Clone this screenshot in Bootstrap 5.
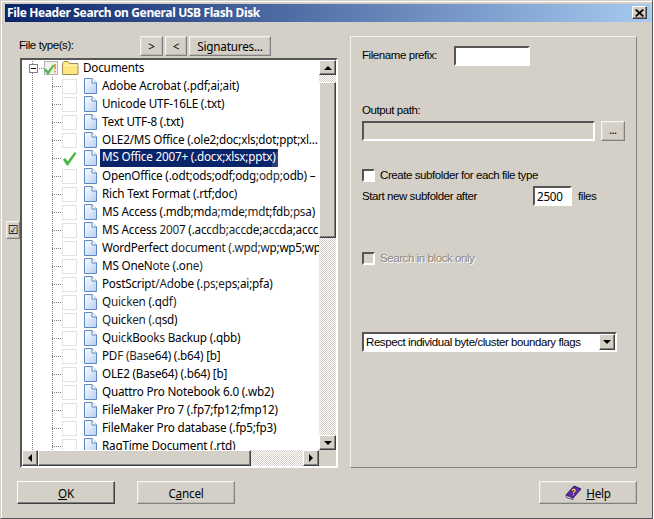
<!DOCTYPE html>
<html lang="en"><head><meta charset="utf-8"><title>File Header Search</title>
<link rel="stylesheet" href="https://cdn.jsdelivr.net/npm/bootstrap@5.3.0/dist/css/bootstrap.min.css">
<style>
html,body{margin:0;padding:0;width:654px;height:519px;overflow:hidden;background:#fff}
body{font-family:"Noto Sans",sans-serif;font-size:11.7px;letter-spacing:-.2px;line-height:16px;color:#000}
.win{width:653px;height:519px;background:#d4d0c8;border-right:1px solid #555;border-bottom:1px solid #555;border-top:1px solid #d4d0c8;border-left:1px solid #d4d0c8;box-shadow:inset 1px 1px 0 #fff;padding-top:3px;overflow:hidden}
.tbar{height:18px;width:646px;margin-left:4px;background:linear-gradient(90deg,#0a246a,#a6caf0);color:#fff;font:bold 12px/18px "Noto Sans",sans-serif;letter-spacing:-.37px;padding-left:2px}
.xbtn{width:15px;height:13px;margin:2px 4px 0 0}
.w95{background:#d4d0c8;border:1px solid;border-color:#fff #404040 #404040 #fff;box-shadow:inset -1px -1px 0 #808080;color:#000;padding:0;font-family:inherit;font-size:11.7px;letter-spacing:-.2px;line-height:14px;border-radius:0;text-align:center}
.w95s{border-color:#f4f3f0 #808080 #808080 #f4f3f0;box-shadow:inset -1px -1px 0 #bdb9b0,inset 1px 1px 0 #dedbd4}
.sunk{background:#fff;border:2px solid;border-color:#555 #fff #fff #555}
.mainrow{margin-top:14px;padding-left:5px}
.toggler{width:14px;height:18px;margin-top:185px;font-family:"DejaVu Sans",sans-serif;font-size:12px;flex:none}
.lcol{width:318px;flex:none}
.toprow{height:22px;margin-left:-1px}
.toplab{width:121px;padding-top:1px}
.narrow{font-family:"Liberation Sans",sans-serif;font-size:11.5px;letter-spacing:-.42px}
.tb{height:20px;margin-right:2px}
.tb1{width:23px}.tb2{width:22px}.tb3{width:82px}
.tree{height:410px}
.rows{height:390px;width:297px;overflow:hidden}
.trow{height:18px;white-space:nowrap;align-items:center;padding-left:40px;padding-bottom:2px;
background-image:repeating-linear-gradient(to bottom,#808080 0 1px,transparent 1px 2px),repeating-linear-gradient(to bottom,#808080 0 1px,transparent 1px 2px),repeating-linear-gradient(to right,#808080 0 1px,transparent 1px 2px);
background-size:1px 18px,1px 18px,10px 1px;background-position:10px 0,30px 0,30px 9px;background-repeat:no-repeat}
.trow0{margin-top:-1px;padding-left:22px;
background-image:repeating-linear-gradient(to bottom,#808080 0 1px,transparent 1px 2px),repeating-linear-gradient(to right,#808080 0 1px,transparent 1px 2px);
background-size:1px 18px,8px 1px;background-position:10px 0,15px 9px}
.ck{width:15px;height:15px;border:1px solid #e2e2e2;flex:none;background:#fff;margin:2px 6px 0 0}
.nock{width:15px;height:15px;flex:none;margin:2px 6px 0 0}
.ck0{width:14px;height:14px;flex:none;margin:2px 4px 0 0}
.doc{flex:none;margin:2px 5px 0 0}
.fold{flex:none;margin:2px 4px 0 0}
.plus{width:9px;height:9px;border:1px solid #808080;background:#fff;position:absolute;left:7px;top:5px;display:flex;align-items:center;justify-content:center}
.plus i{display:block;width:5px;height:1px;background:#000}
.seltxt{background:#0a246a;color:#fff;padding:0 2px;margin:2px 0 0 -2px;height:18px;line-height:15px}
.vs{width:17px;background:repeating-conic-gradient(#d4d0c8 0 25%,#fff 0 50%) 0 0/2px 2px}
.hs{height:16px;background:repeating-conic-gradient(#d4d0c8 0 25%,#fff 0 50%) 0 0/2px 2px}
.sbb{flex:none;width:17px;height:15px;display:flex;align-items:center;justify-content:center}
.vthumb{height:156px;margin-top:7px;width:17px}
.hb{width:16px;height:16px}
.hthumb{width:213px;height:16px}
.corner{width:17px;background:#d4d0c8;flex:none}
.tri-u,.tri-d,.tri-l,.tri-r{display:block;width:0;height:0;border-style:solid;border-color:transparent}
.tri-u{border-width:0 4px 4px;border-bottom-color:#000}
.tri-d{border-width:4px 4px 0;border-top-color:#000}
.tri-l{border-width:4px 4px 4px 0;border-right-color:#000}
.tri-r{border-width:4px 0 4px 4px;border-left-color:#000}
.panel{width:287px;height:432px;margin-left:12px;flex:none;border:1px solid;border-color:#f4f3f0 #85827a #85827a #f4f3f0;padding:9px 0 0 11px}
.pref{width:76px;height:20px}
.lab1{width:92px;padding-top:1px}
.lab2{margin-top:36px;height:16px}
.pathrow{margin-top:3px;height:20px}
.pathin{width:233px;height:20px;background:#d4d0c8}
.dots{width:24px;height:20px;margin-left:6px;line-height:14px;font-weight:bold;font-size:9px;letter-spacing:0}
.chkrow{margin-top:26px;height:16px}
.box{width:13px;height:13px;flex:none;background:#fff;border:2px solid;border-color:#555 #fff #fff #555;margin-right:5px}
.box2{background:#d4d0c8}
.afterrow{margin-top:3px;height:20px}
.afterlab{width:171px}
.cnt{width:39px;height:20px;padding:0 0 0 2px;line-height:16px;font-family:"Noto Sans",sans-serif;font-size:11.7px;letter-spacing:-.3px}
.fl{margin-left:6px}
.srow{margin-top:44px;height:16px;color:#8a877f;text-shadow:1px 1px 0 #fff}
.selbox{margin-top:66px;width:255px;height:20px;padding-left:2px;line-height:15px;white-space:nowrap}
.selarr{width:16px;height:16px;flex:none;margin-left:auto;display:flex;align-items:center;justify-content:center}
.foot{margin-top:13px;padding-left:16px;padding-right:15px}
.fb{width:98px;height:23px}
.fb2{margin-left:22px}
.hicon{margin-right:3px}
.ltr u{text-underline-offset:1px}
.wm{position:absolute;left:60px;top:190px;font:bold 120px/1 "Noto Sans",sans-serif;letter-spacing:0;color:rgba(255,255,255,.14);transform:rotate(-42deg);pointer-events:none;white-space:nowrap}
</style></head><body>
<svg width="0" height="0" style="position:absolute"><defs>
<linearGradient id="g1" x1="0" y1="0" x2="1" y2="1"><stop offset="0" stop-color="#ffffff"/><stop offset="1" stop-color="#b4cff4"/></linearGradient>
<symbol id="dc" viewBox="0 0 14 16"><path d="M1.5.5H9L13.5 5V15.5H1.5Z" fill="url(#g1)" stroke="#5f87c4"/><path d="M9 .5V5H13.5" fill="#fff" stroke="#5f87c4"/></symbol>
<symbol id="ok" viewBox="0 0 16 16"><path d="M1 9 3.5 7.5 6 11 13.5 1 15.5 2.5 6.5 15.5 5 15.5Z" fill="#4cb848"/></symbol>
</defs></svg>
<div class="win position-relative">
<div class="tbar d-flex justify-content-between"><span>File Header Search on General USB Flash Disk</span>
<button class="w95 xbtn d-flex align-items-center justify-content-center" aria-label="Close"><svg width="9" height="8" viewBox="0 0 9 8"><path d="M.7.5 8.3 7.5M8.3.5.7 7.5" stroke="#000" stroke-width="1.7"/></svg></button></div>
<div class="mainrow d-flex">
<button class="w95 w95s toggler">☑</button>
<div class="lcol">
<div class="toprow d-flex"><div class="toplab narrow">File type(s):</div>
<button class="w95 w95s tb tb1">&gt;</button><button class="w95 w95s tb tb2">&lt;</button><button class="w95 w95s tb tb3 ltr">Si<u>g</u>natures...</button></div>
<div class="sunk tree d-flex flex-column">
<div class="d-flex flex-grow-1">
<div class="rows">
<div class="trow trow0 d-flex position-relative"><span class="plus"><i></i></span>
<span class="ck0 position-relative"><svg class="d-block" width="14" height="14" viewBox="0 0 14 14"><rect x=".5" y=".5" width="13" height="13" fill="#f2f2f2" stroke="#b5b5b5"/><path d="M11 3v5" stroke="#e08a2a" stroke-width="1.5"/><path d="M11 9.5v2" stroke="#e08a2a" stroke-width="1.5"/><path d="M0 9 2 7.5 4 10 9 3.5 10.5 4.5 4.5 13.5 3.5 13.5Z" fill="#4cb848"/></svg></span>
<svg class="fold" width="17" height="14" viewBox="0 0 17 14"><path d="M.5 2.5 2 .5H6L7.5 2.5H16V13.5H.5Z" fill="#ffe680" stroke="#9c8a50"/><path d="M1.5 4H15.5V5H1.5Z" fill="#fff6c4"/></svg>Documents</div>
<div class="trow d-flex"><span class="ck"></span><svg class="doc" width="14" height="16"><use href="#dc"/></svg>Adobe Acrobat (.pdf;ai;ait)</div>
<div class="trow d-flex"><span class="ck"></span><svg class="doc" width="14" height="16"><use href="#dc"/></svg>Unicode UTF-16LE (.txt)</div>
<div class="trow d-flex"><span class="ck"></span><svg class="doc" width="14" height="16"><use href="#dc"/></svg>Text UTF-8 (.txt)</div>
<div class="trow d-flex"><span class="ck"></span><svg class="doc" width="14" height="16"><use href="#dc"/></svg>OLE2/MS Office (.ole2;doc;xls;dot;ppt;xl...</div>
<div class="trow d-flex"><svg class="nock" width="15" height="15"><use href="#ok"/></svg><svg class="doc" width="14" height="16"><use href="#dc"/></svg><span class="seltxt">MS Office 2007+ (.docx;xlsx;pptx)</span></div>
<div class="trow d-flex"><span class="ck"></span><svg class="doc" width="14" height="16"><use href="#dc"/></svg>OpenOffice (.odt;ods;odf;odg;odp;odb) –</div>
<div class="trow d-flex"><span class="ck"></span><svg class="doc" width="14" height="16"><use href="#dc"/></svg>Rich Text Format (.rtf;doc)</div>
<div class="trow d-flex"><span class="ck"></span><svg class="doc" width="14" height="16"><use href="#dc"/></svg>MS Access (.mdb;mda;mde;mdt;fdb;psa)</div>
<div class="trow d-flex"><span class="ck"></span><svg class="doc" width="14" height="16"><use href="#dc"/></svg>MS Access 2007 (.accdb;accde;accda;accc</div>
<div class="trow d-flex"><span class="ck"></span><svg class="doc" width="14" height="16"><use href="#dc"/></svg>WordPerfect document (.wpd;wp;wp5;wp</div>
<div class="trow d-flex"><span class="ck"></span><svg class="doc" width="14" height="16"><use href="#dc"/></svg>MS OneNote (.one)</div>
<div class="trow d-flex"><span class="ck"></span><svg class="doc" width="14" height="16"><use href="#dc"/></svg>PostScript/Adobe (.ps;eps;ai;pfa)</div>
<div class="trow d-flex"><span class="ck"></span><svg class="doc" width="14" height="16"><use href="#dc"/></svg>Quicken (.qdf)</div>
<div class="trow d-flex"><span class="ck"></span><svg class="doc" width="14" height="16"><use href="#dc"/></svg>Quicken (.qsd)</div>
<div class="trow d-flex"><span class="ck"></span><svg class="doc" width="14" height="16"><use href="#dc"/></svg>QuickBooks Backup (.qbb)</div>
<div class="trow d-flex"><span class="ck"></span><svg class="doc" width="14" height="16"><use href="#dc"/></svg>PDF (Base64) (.b64) [b]</div>
<div class="trow d-flex"><span class="ck"></span><svg class="doc" width="14" height="16"><use href="#dc"/></svg>OLE2 (Base64) (.b64) [b]</div>
<div class="trow d-flex"><span class="ck"></span><svg class="doc" width="14" height="16"><use href="#dc"/></svg>Quattro Pro Notebook 6.0 (.wb2)</div>
<div class="trow d-flex"><span class="ck"></span><svg class="doc" width="14" height="16"><use href="#dc"/></svg>FileMaker Pro 7 (.fp7;fp12;fmp12)</div>
<div class="trow d-flex"><span class="ck"></span><svg class="doc" width="14" height="16"><use href="#dc"/></svg>FileMaker Pro database (.fp5;fp3)</div>
<div class="trow d-flex"><span class="ck"></span><svg class="doc" width="14" height="16"><use href="#dc"/></svg>RagTime Document (.rtd)</div>
</div>
<div class="vs d-flex flex-column"><div class="w95 sbb"><span class="tri-u"></span></div><div class="w95 vthumb"></div><div class="w95 sbb mt-auto"><span class="tri-d"></span></div></div>
</div>
<div class="d-flex"><div class="hs d-flex flex-grow-1"><div class="w95 sbb hb"><span class="tri-l"></span></div><div class="w95 hthumb"></div><div class="w95 sbb hb ms-auto"><span class="tri-r"></span></div></div><div class="corner"></div></div>
</div>
</div>
<div class="panel narrow">
<div class="d-flex"><div class="lab1">Filename prefix:</div><div class="sunk pref"></div></div>
<div class="lab2">Output path:</div>
<div class="pathrow d-flex"><div class="sunk pathin"></div><button class="w95 w95s dots">...</button></div>
<div class="chkrow d-flex align-items-center"><span class="box"></span>Create subfolder for each file type</div>
<div class="afterrow d-flex align-items-center"><span class="afterlab">Start new subfolder after</span><div class="sunk cnt">2500</div><span class="fl">files</span></div>
<div class="srow d-flex align-items-center"><span class="box box2"></span>Search in block only</div>
<div class="sunk selbox d-flex align-items-center"><span>Respect individual byte/cluster boundary flags</span><span class="w95 selarr"><span class="tri-d"></span></span></div>
</div>
</div>
<div class="foot d-flex ltr">
<button class="w95 fb"><u>O</u>K</button><button class="w95 w95s fb fb2">C<u>a</u>ncel</button>
<button class="w95 w95s fb ms-auto d-flex align-items-center justify-content-center"><svg class="hicon" width="18" height="15" viewBox="0 0 18 15"><path d="M1 10 9 1 16 4 8 13Z" fill="#5b2c9e" stroke="#2e1560"/><path d="M1 10 1.5 12.5 8 14.5 8 13Z" fill="#d8d0e8" stroke="#2e1560" stroke-width=".7"/><path d="M7 5.5C8 3.5 11 4.5 10 6 9.4 7 8.5 7 8.5 8.5M8.3 9.500V10.5" fill="none" stroke="#ffe24a" stroke-width="1.1"/></svg><span><u>H</u>elp</span></button>
</div>
<div class="wm" aria-hidden="true">ader</div>
</div>
</body></html>
